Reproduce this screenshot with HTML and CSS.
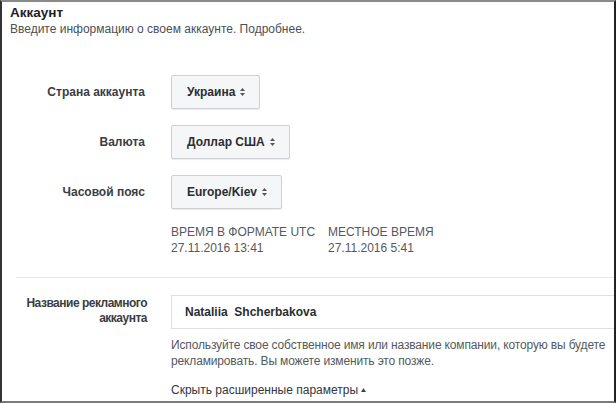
FILE: index.html
```html
<!DOCTYPE html>
<html lang="ru">
<head>
<meta charset="utf-8">
<title>Аккаунт</title>
<link rel="stylesheet" href="styles.css">
</head>
<body>
<div class="frame">
  <header class="head">
    <h1 class="title">Аккаунт</h1>
    <p class="subtitle">Введите информацию о своем аккаунте. Подробнее.</p>
  </header>

  <section class="rows">
    <div class="row">
      <div class="label">Страна аккаунта</div>
      <button class="select">Украина <svg class="sort" width="5" height="8" viewBox="0 0 5 8"><path d="M2.5 0 L5 3 H0 Z M2.5 8 L5 5 H0 Z" fill="#555"/></svg></button>
    </div>
    <div class="row">
      <div class="label">Валюта</div>
      <button class="select">Доллар США <svg class="sort" width="5" height="8" viewBox="0 0 5 8"><path d="M2.5 0 L5 3 H0 Z M2.5 8 L5 5 H0 Z" fill="#555"/></svg></button>
    </div>
    <div class="row">
      <div class="label">Часовой пояс</div>
      <button class="select">Europe/Kiev <svg class="sort" width="5" height="8" viewBox="0 0 5 8"><path d="M2.5 0 L5 3 H0 Z M2.5 8 L5 5 H0 Z" fill="#555"/></svg></button>
    </div>
  </section>

  <div class="times">
    <div class="time time-utc">
      <div class="time-head">ВРЕМЯ В ФОРМАТЕ UTC</div>
      <div class="time-val">27.11.2016 13:41</div>
    </div>
    <div class="time">
      <div class="time-head">МЕСТНОЕ ВРЕМЯ</div>
      <div class="time-val">27.11.2016 5:41</div>
    </div>
  </div>

  <hr class="divider">

  <section class="name-row">
    <div class="label label-top">Название рекламного аккаунта</div>
    <div class="name-col">
      <div class="input">Nataliia&nbsp; Shcherbakova</div>
      <p class="help">Используйте свое собственное имя или название компании, которую вы будете рекламировать. Вы можете изменить это позже.</p>
      <div class="toggle">Скрыть расширенные параметры <svg class="tri" width="5" height="4" viewBox="0 0 5 4"><path d="M2.5 0 L5 4 H0 Z" fill="#444"/></svg></div>
    </div>
  </section>
</div>
</body>
</html>
```

FILE: styles.css
```css
* { box-sizing: border-box; }

html, body {
  margin: 0;
  padding: 0;
  background: #fff;
}

body {
  font-family: "Liberation Sans", Arial, sans-serif;
  color: #1d2129;
  width: 616px;
  height: 403px;
  overflow: hidden;
}

.frame {
  width: 616px;
  height: 403px;
  border-top: 2px solid #8a8a8a;
  border-left: 2px solid #333;
  border-right: 2px solid #222;
  border-bottom: 2px solid #7a7a7a;
  overflow: hidden;
  background: #fff;
}

.head {
  padding: 3px 0 0 8px;
}

.title {
  margin: 0;
  font-size: 13.5px;
  line-height: 16px;
  font-weight: bold;
  color: #1d2129;
}

.subtitle {
  margin: 0;
  font-size: 12px;
  line-height: 16px;
  color: #4b4f56;
}

.rows {
  margin-top: 38px;
  display: flex;
  flex-direction: column;
  gap: 16px;
}

.row {
  display: flex;
  align-items: center;
  gap: 26px;
  height: 34px;
}

.label {
  width: 143px;
  flex: none;
  text-align: right;
  font-size: 12px;
  font-weight: bold;
  color: #3a3d44;
}

.select {
  height: 34px;
  display: flex;
  align-items: center;
  gap: 5px;
  padding: 0 14px 0 15px;
  background: #f5f6f7;
  border: 1px solid #cdd0d4;
  border-radius: 2px;
  box-shadow: 0 1px 1px rgba(0,0,0,0.08);
  font-family: inherit;
  font-size: 12px;
  font-weight: bold;
  color: #2a2d33;
}

.sort { display: block; }

.times {
  margin: 15px 0 0 169px;
  display: flex;
  gap: 16px;
}

.time {
  font-size: 12px;
  line-height: 16px;
  color: #555960;
  white-space: nowrap;
}

.time-utc { width: 141px; }

.divider {
  margin: 21px 0 0 14px;
  border: 0;
  border-top: 1px solid #e6e7e9;
  height: 0;
}

.name-row {
  margin-top: 17px;
  display: flex;
  align-items: flex-start;
  gap: 24px;
}

.label-top {
  width: 145px;
  font-size: 12px;
  letter-spacing: -0.5px;
  line-height: 15px;
  padding-top: 1px;
}

.name-col {
  flex: 1;
  min-width: 0;
  margin-right: -20px;
}

.input {
  height: 34px;
  display: flex;
  align-items: center;
  padding-left: 13px;
  border: 1px solid #dddfe2;
  font-size: 12px;
  font-weight: bold;
  color: #2a2d33;
  white-space: pre;
}

.help {
  margin: 8px 0 0 0;
  width: 450px;
  font-size: 12px;
  letter-spacing: -0.15px;
  line-height: 16px;
  color: #555960;
}

.toggle {
  margin-top: 13px;
  font-size: 12px;
  line-height: 16px;
  color: #33363c;
  display: flex;
  align-items: center;
  gap: 3px;
}

.tri { display: block; }
```
